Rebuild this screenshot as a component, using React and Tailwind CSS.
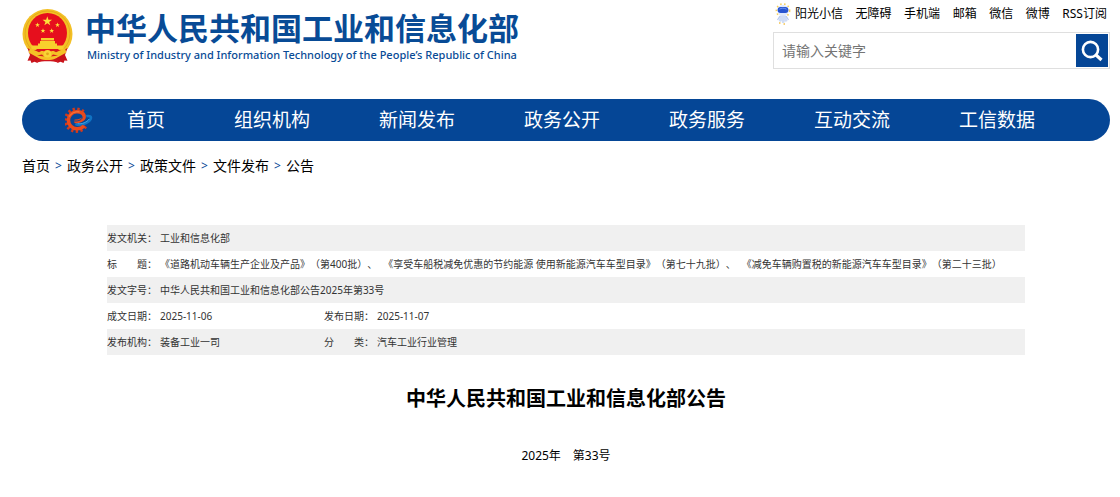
import { useState } from 'react';

const topLinks = ['阳光小信', '无障碍', '手机端', '邮箱', '微信', '微博', 'RSS订阅'];

const navItems = ['首页', '组织机构', '新闻发布', '政务公开', '政务服务', '互动交流', '工信数据'];

const crumbs = ['首页', '政务公开', '政策文件', '文件发布', '公告'];

const titles = [
  '《道路机动车辆生产企业及产品》（第400批）、',
  '《享受车船税减免优惠的节约能源 使用新能源汽车车型目录》（第七十九批）、',
  '《减免车辆购置税的新能源汽车车型目录》（第二十三批）',
];

const teeth = [40, 64, 88, 112, 136, 160, 184, 208, 232, 256, 280, 304];

function Star({ x, y, size }) {
  return (
    <path
      transform={`translate(${x} ${y}) scale(${size})`}
      d="M0-1 .23-.31.95-.31.37.12.59.81 0 .38-.59.81-.37.12-.95-.31-.23-.31Z"
      fill="#fde23a"
    />
  );
}

function Emblem() {
  return (
    <svg viewBox="0 0 51 54" className="h-[54px] w-[51px] shrink-0" aria-hidden="true">
      <ellipse cx="25.5" cy="25" rx="25" ry="25" fill="#f3c025" />
      <ellipse cx="25.5" cy="24.5" rx="22.4" ry="22.5" fill="none" stroke="#e5ab1b" strokeWidth="1" />
      <ellipse cx="25.5" cy="24" rx="19.5" ry="20" fill="#e60f1d" />
      <Star x={25.3} y={12.3} size={5} />
      <Star x={15.5} y={16} size={2.6} />
      <Star x={35.5} y={16} size={2.6} />
      <Star x={21} y={21.8} size={2.6} />
      <Star x={29.7} y={21.8} size={2.6} />
      {/* gate tower */}
      <path d="M19 29h13v2.5H19zM18 32h15v3H18zM16 34.5h19v2H16zM9.5 36.5h32v3.5h-32z" fill="#f8cf2c" />
      {/* ribbons and gear */}
      <path d="M5.5 39 17 45l-1.5 9-3-1.3L9.5 54l-1-2.5-3 .3L8 46zM45.5 39 34 45l1.5 9 3-1.3 3 1.3 1-2.5 3 .3L43 46z" fill="#c9131b" />
      <path d="M16 49h19l1 4.5c-5-1.6-16-1.6-21 0z" fill="#cf151c" />
      <path d="M8 39.5 25.5 43 43 39.5l1.5 4-11 6c-4 2-12 2-16 0l-11-6z" fill="#f4c126" />
      <path d="M12 41h9l-4 2.2zM39 41h-9l4 2.2zM15 46.5l5-1 2 2zM36 46.5l-5-1-2 2z" fill="#d81a1d" />
      <circle cx="25.5" cy="44.8" r="3.8" fill="#f9d536" />
      <circle cx="25.5" cy="44.8" r="1.4" fill="#e2a51b" />
    </svg>
  );
}

function Mascot() {
  return (
    <svg viewBox="0 0 16 22" className="h-[22px] w-4 shrink-0" aria-hidden="true">
      <circle cx="8" cy="7.5" r="6.6" fill="none" stroke="#f7cf55" strokeWidth="1.6" strokeDasharray="1.5 2.5" />
      <circle cx="8" cy="7.5" r="5.6" fill="#dfe8fa" />
      <rect x="2.6" y="4" width="10.8" height="6" rx="3" fill="#2854cf" />
      <path d="M4.5 6.2c1.5-1.3 5-1.4 7 0" fill="none" stroke="#6b93ee" />
      <path d="M5 12.5h6l1.5 5.5-2 1-.6-1.5-.6 2.5H7l-.5-2.5-.8 1.5-2-1z" fill="#cfdcf5" />
      <path d="M5 13 2.5 17M11 13l2.5 4" stroke="#b9ccf0" strokeWidth="1.3" />
      <path d="M4 20h1.5M8.5 21h1.5" stroke="#f3c24a" strokeWidth="1.6" />
    </svg>
  );
}

function GearLogo() {
  return (
    <svg viewBox="0 0 28 27" className="h-[27px] w-7 shrink-0" fill="none" aria-hidden="true">
      {teeth.map((a) => (
        <rect key={a} x="20" y="12" width="4.2" height="2.4" fill="#d23a1c" transform={`rotate(${a} 11.5 13.2)`} />
      ))}
      {/* blue orbit */}
      <path d="M10.5 16.8c4.5 2.6 12.4-.4 15-4.5 1.6-2.7-1.2-3.8-4.3-3.1" stroke="#1173c2" strokeWidth="2.6" />
      <path d="M12.5 16.6c4.2.9 9.5-1.3 11.7-4.6" stroke="#3fa4e0" strokeWidth="1" />
      {/* letter ring */}
      <path
        d="M9.5 14.3c4.8.3 9.2-1.6 9.6-4.4.4-3.6-3.5-5.2-7.5-5.1-5 .2-8.2 4-8.2 8.4 0 4.8 3.8 8.6 8.6 8.6 3 0 5.4-1.1 7-2.9"
        stroke="#ea4a1c"
        strokeWidth="3.6"
      />
      <path d="M9.8 14c4 .2 7.2-1.4 7.6-3.6" stroke="#054696" strokeWidth="1" />
      <path d="M4.4 9.5C6.2 6 10.2 4.2 14.5 5" stroke="#f78145" strokeWidth="1" />
    </svg>
  );
}

function Header() {
  const [keyword, setKeyword] = useState('');

  return (
    <header className="flex items-start justify-between">
      <a href="#" className="flex gap-3 pt-[9px] text-[#084b96]">
        <Emblem />
        <span className="flex flex-col">
          <span className="text-[31px] leading-[38px] font-bold whitespace-nowrap">中华人民共和国工业和信息化部</span>
          <span className="pl-0.5 text-[11px] leading-4 font-medium whitespace-nowrap">
            Ministry of Industry and Information Technology of the People’s Republic of China
          </span>
        </span>
      </a>

      <div className="w-[337px]">
        <nav className="flex h-8 items-start justify-between pr-[3px] pl-0.5 text-[12px] leading-7">
          {topLinks.map((item, i) => (
            <a key={item} href="#" className="flex items-center gap-1 whitespace-nowrap">
              {i === 0 && <Mascot />}
              {item}
            </a>
          ))}
        </nav>
        <form
          className="flex h-[37px] items-center border border-[#dfdfdf] p-px"
          onSubmit={(e) => e.preventDefault()}
        >
          <input
            type="text"
            aria-label="请输入关键字"
            placeholder="请输入关键字"
            value={keyword}
            onChange={(e) => setKeyword(e.target.value)}
            className="h-full min-w-0 flex-1 px-[7px] text-[14px] outline-none placeholder:text-[#757575]"
          />
          <button type="submit" aria-label="搜索" className="flex h-full w-8 items-center justify-center bg-[#054696]">
            <svg viewBox="0 0 22 22" className="h-[22px] w-[22px]" fill="none" stroke="#fff" aria-hidden="true">
              <circle cx="9.5" cy="9.5" r="7.6" strokeWidth="2.6" />
              <path d="m15 15 5.5 5" strokeWidth="3.2" />
            </svg>
          </button>
        </form>
      </div>
    </header>
  );
}

function MetaTable() {
  const label = 'p-0 text-left font-normal whitespace-nowrap';

  return (
    <table className="w-full table-fixed border-collapse text-[10px] leading-[26px] text-[#333] [text-spacing-trim:space-all]">
      <colgroup>
        <col className="w-[53px]" />
        <col className="w-[164px]" />
        <col className="w-[53px]" />
        <col />
      </colgroup>
      <tbody>
        <tr className="bg-[#f0f0f0]">
          <th scope="row" className={label}>发文机关：</th>
          <td colSpan={3}>工业和信息化部</td>
        </tr>
        <tr>
          <th scope="row" className={label}>标　　题：</th>
          <td colSpan={3}>
            <div className="flex flex-wrap gap-x-1.5">
              {titles.map((t) => (
                <span key={t}>{t}</span>
              ))}
            </div>
          </td>
        </tr>
        <tr className="bg-[#f0f0f0]">
          <th scope="row" className={label}>发文字号：</th>
          <td colSpan={3}>中华人民共和国工业和信息化部公告2025年第33号</td>
        </tr>
        <tr>
          <th scope="row" className={label}>成文日期：</th>
          <td>2025-11-06</td>
          <th scope="row" className={label}>发布日期：</th>
          <td>2025-11-07</td>
        </tr>
        <tr className="bg-[#f0f0f0]">
          <th scope="row" className={label}>发布机构：</th>
          <td>装备工业一司</td>
          <th scope="row" className={label}>分　　类：</th>
          <td>汽车工业行业管理</td>
        </tr>
      </tbody>
    </table>
  );
}

function App() {
  return (
    <div
      lang="zh-CN"
      className="bg-white pr-2.5 pb-8 pl-[22px] font-['Noto_Sans','Noto_Sans_CJK_SC',sans-serif] text-black"
    >
      <Header />

      <nav className="mt-[30px] flex h-[42px] items-center rounded-full bg-[#054696] pl-[43px] text-[19px] text-white">
        <GearLogo />
        <div className="ml-[34px] flex gap-[69px]">
          {navItems.map((item) => (
            <a key={item} href="#" className="whitespace-nowrap">
              {item}
            </a>
          ))}
        </div>
      </nav>

      <nav aria-label="当前位置" className="mt-[13px] flex text-[14px] leading-6">
        {crumbs.map((item, i) => (
          <span key={item} className="flex">
            {i > 0 && <span className="w-[17px] text-center text-[12px] text-[#054696]">&gt;</span>}
            <a href="#">{item}</a>
          </span>
        ))}
      </nav>

      <main className="mt-[47px] px-[85px]">
        <MetaTable />
        <h1 className="mt-[30px] text-center text-[20px] leading-7 font-bold">中华人民共和国工业和信息化部公告</h1>
        <p className="mt-[31px] text-center text-[12px] leading-6">2025年　第33号</p>
      </main>
    </div>
  );
}

export default App;
